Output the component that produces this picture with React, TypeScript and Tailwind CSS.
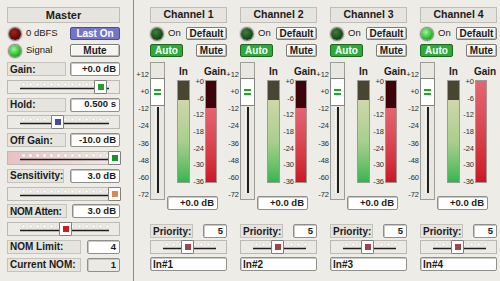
const face = "font-['Liberation_Sans',Arial,sans-serif]";

type MasterItem =
  | { kind: "row"; label: string; value: string; lw: string; vw: string; readOnly?: boolean }
  | { kind: "slider"; pos: number; thumb: string; tint?: boolean };

const masterItems: MasterItem[] = [
  { kind: "row", label: "Gain:", value: "+0.0 dB", lw: "w-[59px]", vw: "w-[50px]" },
  { kind: "slider", pos: 86, thumb: "bg-[#1f9f2d]" },
  { kind: "row", label: "Hold:", value: "0.500 s", lw: "w-[59px]", vw: "w-[50px]" },
  { kind: "slider", pos: 43, thumb: "bg-[#4646ad]" },
  { kind: "row", label: "Off Gain:", value: "-10.0 dB", lw: "w-[59px]", vw: "w-[50px]" },
  { kind: "slider", pos: 100, thumb: "bg-[#14952a]", tint: true },
  { kind: "row", label: "Sensitivity:", value: "3.0 dB", lw: "w-[57px]", vw: "w-[50px]" },
  { kind: "slider", pos: 100, thumb: "bg-[#d9884f]" },
  { kind: "row", label: "NOM Atten:", value: "3.0 dB", lw: "w-[60px] tracking-[-0.3px]", vw: "w-[48px]" },
  { kind: "slider", pos: 51, thumb: "bg-[#d41b1b]" },
  { kind: "row", label: "NOM Limit:", value: "4", lw: "w-[74px]", vw: "w-[33px]" },
  { kind: "row", label: "Current NOM:", value: "1", lw: "w-[74px]", vw: "w-[33px]", readOnly: true },
];

const channels = [
  { name: "Channel 1", input: "In#1", on: false, gainDark: true },
  { name: "Channel 2", input: "In#2", on: false, gainDark: true },
  { name: "Channel 3", input: "In#3", on: false, gainDark: true },
  { name: "Channel 4", input: "In#4", on: true, gainDark: false },
];

const faderScale = ["+12", "+0", "-12", "-24", "-36", "-48", "-60", "-72"];
const gainScale = ["+0", "-6", "-12", "-18", "-24", "-30", "-36"];

function Label({ text, className = "" }: { text: string; className?: string }) {
  return (
    <div
      className={`flex h-[14px] items-center whitespace-nowrap border border-[#c3c2bb] bg-[#e5e4de] px-[2px] text-[10px] font-bold text-[#1b1b1b] ${className}`}
    >
      {text}
    </div>
  );
}

function Value({ text, className = "", gray }: { text: string; className?: string; gray?: boolean }) {
  return (
    <div
      className={`flex h-[14px] items-center justify-end whitespace-nowrap rounded-[2px] border border-[#8f8f8b] pr-[3px] text-[9.5px] font-bold text-[#1b1b1b] shadow-[inset_1px_1px_0_#c9c9c4] ${
        gray ? "bg-[#ebeae5]" : "bg-white"
      } ${className}`}
    >
      {text}
    </div>
  );
}

function Button({ text, className = "" }: { text: string; className?: string }) {
  return (
    <div
      className={`flex h-[13px] items-center justify-center rounded-[2px] border border-[#7b7b77] bg-[#f4f4f0] text-[10px] font-bold text-[#1b1b1b] shadow-[inset_-1px_-1px_0_#b9b9b4,inset_1px_1px_0_#ffffff] ${className}`}
    >
      {text}
    </div>
  );
}

function Led({ tone }: { tone: "red" | "green" | "dim" }) {
  const fill =
    tone === "red"
      ? "bg-[radial-gradient(circle_at_40%_35%,#a52222,#6a0b0b_55%,#380404)]"
      : tone === "green"
        ? "bg-[radial-gradient(circle_at_40%_35%,#9cf59c,#2fc02f_55%,#137a13)]"
        : "bg-[radial-gradient(circle_at_40%_35%,#3f7f3f,#1c4f1c_55%,#0c2c0c)]";
  return <div className={`h-[12px] w-[12px] shrink-0 rounded-full shadow-[0_0_0_1px_#8b8b86,0_0_0_2px_#d5d4cf] ${fill}`} />;
}

function Slider({ width, pos, thumb, tint }: { width: number; pos: number; thumb: string; tint?: boolean }) {
  const ticks: number[] = [];
  for (let x = 14; x <= width - 12; x += 7) ticks.push(x);
  return (
    <div
      className={`relative h-[14px] border border-[#bab9b2] ${
        tint ? "bg-gradient-to-r from-[#e6c2c2] via-[#ead6d4] to-[#efe9e5]" : "bg-[#ebeae4]"
      } ${width === 113 ? "w-[113px]" : "w-[77px]"}`}
    >
      <svg className="absolute left-0 top-0" width={width - 2} height={12}>
        {ticks.map((x) => (
          <rect key={x} x={x} y={2} width={3} height={3} fill="#ffffff" stroke="#c9c8c2" strokeWidth={0.5} />
        ))}
        <line x1={12} x2={width - 12} y1={7.5} y2={7.5} stroke="#1d1d1d" strokeWidth={1.4} />
      </svg>
      <div
        className="absolute top-[-1px] flex h-[14px] w-[13px] items-center justify-center rounded-[1px] border border-[#7f7f7b] bg-white"
        style={{ left: pos }}
      >
        <div className={`h-[6px] w-[6px] ${thumb}`} />
      </div>
    </div>
  );
}

function Fader() {
  return (
    <div className="flex">
      <div className="relative h-[138px] w-[14px]">
        {faderScale.map((t, i) => (
          <span
            key={t}
            className="absolute right-[1px] text-[7.5px] leading-none text-[#2c2c2c]"
            style={{ top: 13 + i * 17.15 - 4 }}
          >
            {t}
          </span>
        ))}
      </div>
      <div className="relative h-[138px] w-[15px] border border-[#9d9c97] bg-[#e8e7e1]">
        <div className="absolute bottom-[6px] left-[4px] top-[44px] w-[1px] border-l border-dotted border-white" />
        <div className="absolute bottom-[6px] left-[6px] top-[44px] w-[2px] bg-[#202020]" />
        <div className="absolute left-[-1px] top-[15px] flex h-[28px] w-[15px] flex-col items-center justify-center gap-[2px] border border-[#858581] bg-white">
          <div className="h-[2px] w-[7px] bg-[#1da82b]" />
          <div className="h-[2px] w-[7px] bg-[#1da82b]" />
        </div>
      </div>
    </div>
  );
}

function Meters({ gainDark }: { gainDark: boolean }) {
  return (
    <div className="flex h-[103px] items-stretch">
      <div className="ml-[10px] flex w-[13px] flex-col border border-[#9a9995] shadow-[inset_0_0_0_1px_rgba(255,255,255,0.5)]">
        <div className="h-[19px] bg-[#4a4532]" />
        <div className="flex-1 bg-gradient-to-b from-[#cfd7a9] via-[#a8cf8e] to-[#2fb650]" />
      </div>
      <div className="relative w-[15px]">
        {gainScale.map((t, i) => (
          <span
            key={t}
            className="absolute right-[1px] text-[7.5px] leading-none text-[#2c2c2c]"
            style={{ top: 2 + i * 16.67 - 4 }}
          >
            {t}
          </span>
        ))}
      </div>
      <div className="flex w-[12px] flex-col border border-[#9a9995]">
        {gainDark ? <div className="h-[27px] bg-[#3d0509]" /> : null}
        <div className="flex-1 bg-gradient-to-b from-[#e66474] to-[#cc1325]" />
      </div>
    </div>
  );
}

function Channel({ name, input, on, gainDark }: (typeof channels)[number]) {
  return (
    <div className="flex w-[77px] flex-col">
      <div className="flex h-[16px] items-center justify-center border border-[#bebdb6] bg-[#e5e4de] text-[10.5px] font-bold text-[#1b1b1b]">
        {name}
      </div>
      <div className="mt-[4px] flex h-[13px] items-center">
        <div className="ml-[1px]">
          <Led tone={on ? "green" : "dim"} />
        </div>
        <span className="ml-[5px] text-[9.5px] text-[#1b1b1b]">On</span>
        <Button text="Default" className="ml-auto w-[41px]" />
      </div>
      <div className="mt-[4px] flex h-[13px] items-center">
        <div className="flex h-[13px] w-[33px] items-center justify-center rounded-[2px] border border-[#1d6b23] bg-[#2ea93a] text-[10px] font-bold text-white">
          Auto
        </div>
        <Button text="Mute" className="ml-auto w-[31px]" />
      </div>
      <div className="-ml-[14px] mt-[5px] flex">
        <Fader />
        <div className="ml-[2px] flex w-[60px] flex-col">
          <div className="flex h-[18px] items-center text-[10px] font-bold text-[#1b1b1b]">
            <span className="ml-[12px]">In</span>
            <span className="ml-[16px]">Gain</span>
          </div>
          <Meters gainDark={gainDark} />
          <Value text="+0.0 dB" className="mt-[13px] w-[51px]" />
        </div>
      </div>
      <div className="mt-[14px] flex items-center justify-between">
        <Label text="Priority:" className="w-[43px]" />
        <Value text="5" className="w-[24px]" />
      </div>
      <div className="mt-[2px]">
        <Slider width={77} pos={30} thumb="bg-[#a2424f]" />
      </div>
      <div className="mt-[3px] flex h-[14px] items-center rounded-[2px] border border-[#8f8f8b] bg-white pl-[2px] text-[10px] font-bold text-[#1b1b1b] shadow-[inset_1px_1px_0_#c9c9c4]">
        {input}
      </div>
    </div>
  );
}

export default function App() {
  return (
    <div className={`flex h-[281px] w-[500px] overflow-hidden bg-[#edece6] ${face}`}>
      <section className="flex w-[134px] shrink-0 flex-col border-r border-[#8e8d89] pl-[7px] pt-[7px]">
        <div className="flex h-[16px] w-[113px] items-center justify-center border border-[#bebdb6] bg-[#e5e4de] text-[11px] font-bold text-[#1b1b1b]">
          Master
        </div>
        <div className="mt-[4px] flex h-[13px] w-[113px] items-center">
          <div className="ml-[2px]">
            <Led tone="red" />
          </div>
          <span className="ml-[5px] text-[9.5px] text-[#1b1b1b]">0 dBFS</span>
          <div className="ml-auto flex h-[13px] w-[50px] items-center justify-center rounded-[2px] border border-[#4d4d8f] bg-[#7574c6] text-[10px] font-bold text-white">
            Last On
          </div>
        </div>
        <div className="mt-[4px] flex h-[13px] w-[113px] items-center">
          <div className="ml-[2px]">
            <Led tone="green" />
          </div>
          <span className="ml-[5px] text-[9.5px] text-[#1b1b1b]">Signal</span>
          <Button text="Mute" className="ml-auto w-[50px]" />
        </div>
        <div className="mt-[5px] flex w-[113px] flex-col gap-[3.8px]">
          {masterItems.map((item, i) =>
            item.kind === "row" ? (
              <div key={i} className="flex items-center justify-between">
                <Label text={item.label} className={item.lw} />
                <Value text={item.value} className={item.vw} gray={item.readOnly} />
              </div>
            ) : (
              <Slider key={i} width={113} pos={item.pos} thumb={item.thumb} tint={item.tint} />
            )
          )}
        </div>
      </section>
      <section className="flex gap-[13px] pl-[16px] pt-[7px]">
        {channels.map((c) => (
          <Channel key={c.name} {...c} />
        ))}
      </section>
    </div>
  );
}
